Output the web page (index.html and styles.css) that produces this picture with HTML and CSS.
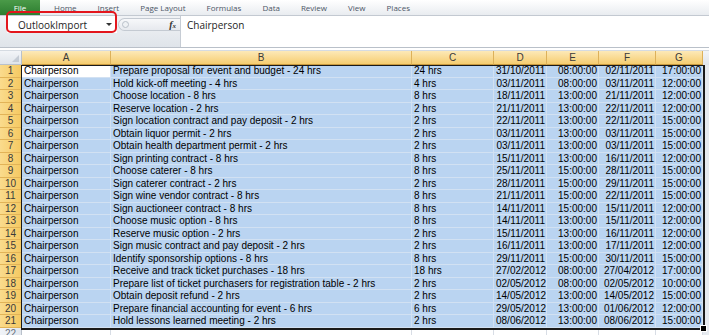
FILE: index.html
```html
<!DOCTYPE html>
<html lang="en">
<head>
    <meta charset="UTF-8">
    <title>OutlookImport - Excel</title>
    <link rel="stylesheet" href="styles.css">
</head>
<body>
    <div class="app">
        <div class="ribbon-tabs">
            <span class="tab file">File</span>
            <span class="tab">Home</span>
            <span class="tab">Insert</span>
            <span class="tab">Page Layout</span>
            <span class="tab">Formulas</span>
            <span class="tab">Data</span>
            <span class="tab">Review</span>
            <span class="tab">View</span>
            <span class="tab">Places</span>
        </div>

        <div class="formula-bar">
            <div class="name-area">
                <div class="name-row">
                    <div class="namebox">
                        <span>OutlookImport</span>
                        <span class="caret"></span>
                    </div>
                    <div class="fx-area">
                        <span class="dot"></span>
                        <span class="fx">f<small>x</small></span>
                    </div>
                </div>
            </div>
            <div class="formula-input">Chairperson</div>
            <div class="callout"></div>
        </div>

        <div class="sheet">
            <div class="row head">
                <div class="corner"><span class="tri"></span></div>
                <div class="ch">A</div>
                <div class="ch">B</div>
                <div class="ch">C</div>
                <div class="ch">D</div>
                <div class="ch">E</div>
                <div class="ch">F</div>
                <div class="ch">G</div>
                <div class="fill"></div>
            </div>
            <div id="rows"></div>
            <div class="row blank">
                <div class="rh">22</div>
                <div class="c"></div><div class="c"></div><div class="c"></div><div class="c"></div>
                <div class="c"></div><div class="c"></div><div class="c"></div>
                <div class="fill"></div>
            </div>
            <div class="selection"><span class="handle"></span></div>
        </div>
    </div>

    <script>
        const tasks = [
            ['Prepare proposal for event and budget - 24 hrs', '24 hrs', '31/10/2011', '08:00:00', '02/11/2011', '17:00:00'],
            ['Hold kick-off meeting - 4 hrs', '4 hrs', '03/11/2011', '08:00:00', '03/11/2011', '12:00:00'],
            ['Choose location - 8 hrs', '8 hrs', '18/11/2011', '13:00:00', '21/11/2011', '12:00:00'],
            ['Reserve location - 2 hrs', '2 hrs', '21/11/2011', '13:00:00', '22/11/2011', '12:00:00'],
            ['Sign location contract and pay deposit - 2 hrs', '2 hrs', '22/11/2011', '13:00:00', '22/11/2011', '15:00:00'],
            ['Obtain liquor permit - 2 hrs', '2 hrs', '03/11/2011', '13:00:00', '03/11/2011', '15:00:00'],
            ['Obtain health department permit - 2 hrs', '2 hrs', '03/11/2011', '13:00:00', '03/11/2011', '15:00:00'],
            ['Sign printing contract - 8 hrs', '8 hrs', '15/11/2011', '13:00:00', '16/11/2011', '12:00:00'],
            ['Choose caterer - 8 hrs', '8 hrs', '25/11/2011', '15:00:00', '28/11/2011', '15:00:00'],
            ['Sign caterer contract - 2 hrs', '2 hrs', '28/11/2011', '15:00:00', '29/11/2011', '15:00:00'],
            ['Sign wine vendor contract - 8 hrs', '8 hrs', '21/11/2011', '15:00:00', '22/11/2011', '15:00:00'],
            ['Sign auctioneer contract - 8 hrs', '8 hrs', '14/11/2011', '15:00:00', '15/11/2011', '12:00:00'],
            ['Choose music option - 8 hrs', '8 hrs', '14/11/2011', '13:00:00', '15/11/2011', '12:00:00'],
            ['Reserve music option - 2 hrs', '2 hrs', '15/11/2011', '13:00:00', '16/11/2011', '12:00:00'],
            ['Sign music contract and pay deposit - 2 hrs', '2 hrs', '16/11/2011', '13:00:00', '17/11/2011', '12:00:00'],
            ['Identify sponsorship options - 8 hrs', '8 hrs', '29/11/2011', '15:00:00', '30/11/2011', '15:00:00'],
            ['Receive and track ticket purchases - 18 hrs', '18 hrs', '27/02/2012', '08:00:00', '27/04/2012', '17:00:00'],
            ['Prepare list of ticket purchasers for registration table - 2 hrs', '2 hrs', '02/05/2012', '08:00:00', '02/05/2012', '10:00:00'],
            ['Obtain deposit refund - 2 hrs', '2 hrs', '14/05/2012', '13:00:00', '14/05/2012', '15:00:00'],
            ['Prepare financial accounting for event - 6 hrs', '6 hrs', '29/05/2012', '13:00:00', '01/06/2012', '12:00:00'],
            ['Hold lessons learned meeting - 2 hrs', '2 hrs', '08/06/2012', '13:00:00', '08/06/2012', '15:00:00']
        ];

        const rows = document.getElementById('rows');
        tasks.forEach((t, i) => {
            const row = document.createElement('div');
            row.className = 'row sel';
            row.innerHTML = `
                <div class="rh">${i + 1}</div>
                <div class="c${i === 0 ? ' active' : ''}">Chairperson</div>
                <div class="c">${t[0]}</div>
                <div class="c">${t[1]}</div>
                <div class="c num">${t[2]}</div>
                <div class="c num">${t[3]}</div>
                <div class="c num">${t[4]}</div>
                <div class="c num">${t[5]}</div>
                <div class="fill"></div>
            `;
            rows.appendChild(row);
        });
    </script>
</body>
</html>
```

FILE: styles.css
```css
body {
    margin: 0;
    padding: 0;
    font-family: "Liberation Sans", Arial, sans-serif;
    background-color: #ffffff;
}
.app {
    position: relative;
    width: 709px;
    height: 335px;
    overflow: hidden;
}

/* ribbon tabs */
.ribbon-tabs {
    height: 15px;
    display: flex;
    align-items: center;
    gap: 21px;
    background: linear-gradient(#ffffff, #e9ecf0);
    border-bottom: 1px solid #c3c9d1;
    font-family: "Open Sans", sans-serif;
    font-size: 8px;
    color: #4c5666;
}
.tab {
    line-height: 15px;
}
.tab.file {
    width: 40px;
    height: 15px;
    margin-right: -7px;
    background: linear-gradient(#4a9a48, #2d7d30);
    color: #ffffff;
    text-align: center;
}

/* formula bar */
.formula-bar {
    position: relative;
    height: 31px;
    display: flex;
    background: linear-gradient(#f1f3f6, #dfe4ea);
    border-bottom: 1px solid #b9c0c9;
}
.name-area {
    width: 180px;
}
.name-row {
    display: flex;
    height: 17px;
    align-items: center;
}
.namebox {
    width: 110px;
    height: 17px;
    margin-left: 7px;
    box-sizing: border-box;
    background-color: #ffffff;
    display: flex;
    align-items: center;
    justify-content: space-between;
    padding: 0 5px 0 11px;
    font-family: "Open Sans", sans-serif;
    font-size: 10px;
    color: #1e1e1e;
}
.caret {
    width: 0;
    height: 0;
    border-left: 3px solid transparent;
    border-right: 3px solid transparent;
    border-top: 3px solid #333333;
}
.fx-area {
    flex: 1;
    height: 13px;
    margin-left: 1px;
    box-sizing: border-box;
    border: 1px solid #c4cad2;
    border-right: none;
    border-radius: 7px 0 0 7px;
    background: linear-gradient(#f7f8fa, #e6e9ee);
    display: flex;
    align-items: center;
    justify-content: space-between;
    padding: 0 4px 0 3px;
}
.dot {
    width: 5px;
    height: 5px;
    border-radius: 50%;
    border: 1px solid #b8bfc8;
    background-color: #eef1f4;
}
.fx {
    font-family: "Liberation Serif", serif;
    font-style: italic;
    font-weight: bold;
    font-size: 10px;
    color: #333333;
}
.fx small {
    font-size: 7px;
}
.formula-input {
    flex: 1;
    background-color: #ffffff;
    border-left: 1px solid #c6ccd4;
    padding: 2px 6px;
    font-family: "Open Sans", sans-serif;
    font-size: 10px;
    color: #1e1e1e;
}
.callout {
    position: absolute;
    left: 6px;
    top: -5px;
    width: 111px;
    height: 22px;
    box-sizing: border-box;
    border: 2px solid #e3161d;
    border-radius: 5px;
}

/* sheet grid */
.sheet {
    position: relative;
    margin-top: 2px;
    border-top: 1px solid #d5dbe2;
    background-color: #ffffff;
}
.row {
    display: grid;
    grid-template-columns: 22px 89px 301px 82px 53px 52px 57px 47px 6px;
    height: 12.5px;
    font-size: 10px;
    line-height: 12px;
}
.row > div {
    box-sizing: border-box;
    white-space: nowrap;
    overflow: hidden;
}
.row.head {
    height: 14px;
}
.corner {
    position: relative;
    background: linear-gradient(#f3f5f8, #dfe4ea);
    border-right: 1px solid #b9c1cb;
    border-bottom: 1px solid #b9c1cb;
}
.tri {
    position: absolute;
    right: 2px;
    bottom: 2px;
    width: 0;
    height: 0;
    border-left: 7px solid transparent;
    border-bottom: 7px solid #c5ccd5;
}
.ch {
    background: linear-gradient(#fce9b8, #f6cd70);
    border-right: 1px solid #ddb15a;
    border-bottom: 1px solid #c99a3e;
    text-align: center;
    color: #3a3a3a;
    line-height: 13px;
}
.fill {
    background-color: #e6eaef;
}
.row.head .fill {
    background: linear-gradient(#f3f5f8, #dfe4ea);
}
.rh {
    background: linear-gradient(90deg, #fadb8d, #f5c962);
    border-right: 1px solid #c99a3e;
    border-bottom: 1px solid #e2b357;
    text-align: center;
    color: #3a3a3a;
}
.c {
    border-right: 1px solid #d2e1f2;
    border-bottom: 1px solid #d2e1f2;
    padding: 0 2px;
    color: #000000;
}
.row.sel .c {
    background-color: #bad4f1;
}
.row.sel .c.active {
    background-color: #ffffff;
}
.c.num {
    text-align: right;
    padding-right: 1px;
}
.row.blank .rh {
    background: linear-gradient(90deg, #f1f4f8, #e2e7ee);
    border-right: 1px solid #b9c1cb;
    border-bottom: 1px solid #d5dbe2;
    color: #6a7380;
}
.row.blank .c {
    border-right: 1px solid #d8dde5;
    border-bottom: 1px solid #d8dde5;
}

/* selection outline over A1:G21 */
.selection {
    position: absolute;
    left: 21px;
    top: 14px;
    width: 684px;
    height: 265px;
    box-sizing: border-box;
    border: 1px solid #1a1a1a;
    border-right-width: 2px;
    border-bottom-width: 2px;
}
.handle {
    position: absolute;
    right: -4px;
    bottom: -4px;
    width: 5px;
    height: 5px;
    background-color: #000000;
    border: 1px solid #ffffff;
}
```
